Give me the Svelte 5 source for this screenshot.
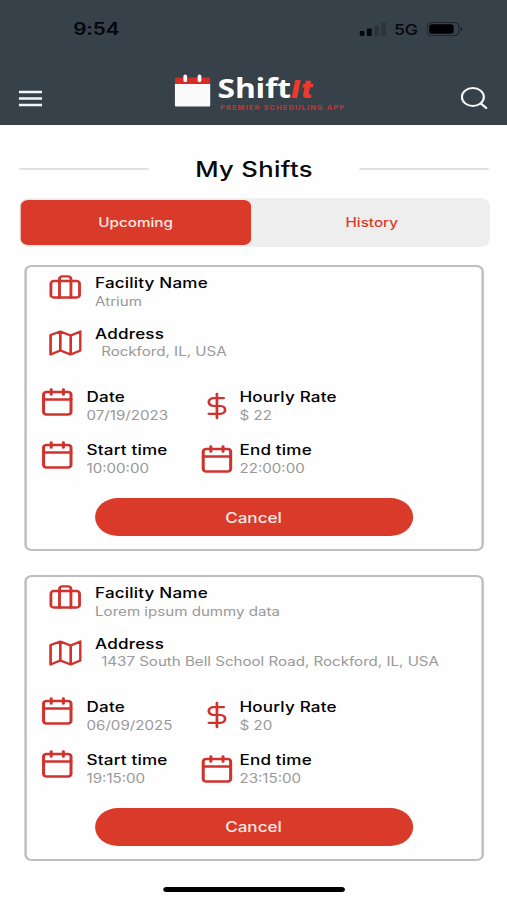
<script>
  let active = "Upcoming";
  const tabs = ["Upcoming", "History"];
  const shifts = [
    {
      facility: "Atrium",
      address: "Rockford, IL, USA",
      date: "07/19/2023",
      rate: 22,
      start: "10:00:00",
      end: "22:00:00"
    },
    {
      facility: "Lorem ipsum dummy data",
      address: "1437 South Bell School Road, Rockford, IL, USA",
      date: "06/09/2025",
      rate: 20,
      start: "19:15:00",
      end: "23:15:00"
    }
  ];
</script>

<style>
  :global(body) {
    background: #fefefe;
    overflow: hidden;
  }

  /* laid out 416 wide, stretched to fill the 507 window */
  .screen {
    width: 416px;
    height: 900px;
    display: flex;
    flex-direction: column;
    font-family: Inter, "Liberation Sans", sans-serif;
    color: #0c0c0c;
    background: #fefefe;
    transform: scaleX(1.21875);
    transform-origin: 0 0;
  }

  svg {
    display: block;
    flex: none;
  }

  header {
    height: 125px;
    flex: none;
    background: #37414a;
  }

  .status {
    display: flex;
    align-items: center;
    height: 58px;
    padding: 0 36px 0 60px;
    box-sizing: border-box;
    color: #04080c;
  }

  .time {
    font-size: 17px;
    font-weight: 600;
    letter-spacing: -0.1px;
    flex: 1;
  }

  .network {
    font-size: 14.5px;
    font-weight: 500;
    margin: 0 7px 0 6px;
  }

  .nav {
    display: flex;
    align-items: center;
    height: 67px;
    padding: 13px 16px 0 14.5px;
    box-sizing: border-box;
  }

  .brand {
    display: flex;
    align-items: flex-start;
    flex: 1;
    height: 40px;
    margin: 0 0 9px 108.5px;
  }

  .words {
    margin-left: 5.5px;
  }

  .name {
    font-family: "Open Sans", Inter, sans-serif;
    font-size: 26px;
    line-height: 29px;
    font-weight: 700;
    letter-spacing: -0.1px;
    color: #fff;
  }

  .name em {
    font-family: Inter, sans-serif;
    font-size: 25px;
    line-height: 1;
    font-weight: 800;
    letter-spacing: 0.8px;
    color: #ee3a2c;
  }

  .tagline {
    font-size: 6px;
    line-height: 8px;
    font-weight: 700;
    letter-spacing: 1px;
    margin: 1px 0 0 2px;
    white-space: nowrap;
    color: #c93530;
  }

  .menu,
  .search {
    padding: 0;
    border: 0;
    background: none;
  }

  .title {
    display: flex;
    align-items: center;
    justify-content: space-between;
    height: 40px;
    margin: 24px 15px 9px 16px;
  }

  .title::before,
  .title::after {
    content: "";
    width: 106px;
    height: 2px;
    background: #e0e0e0;
  }

  h1 {
    margin: 0;
    font-size: 21px;
    font-weight: 500;
    letter-spacing: 0.3px;
    color: #080808;
  }

  .tabs {
    display: flex;
    height: 49px;
    margin: 0 14.5px 0 16px;
    padding: 2px 1px;
    box-sizing: border-box;
    border-radius: 8px;
    background: #eee;
  }

  .tabs button {
    flex: 1;
    padding: 0 0 1px 4px;
    border: 0;
    border-radius: 6px;
    background: none;
    font: 500 12.5px Inter, sans-serif;
    color: #dc3a2b;
  }

  .tabs button.active {
    flex: none;
    width: 188.5px;
    padding: 0 0 1px;
    background: #d93a29;
    color: #fbe9e6;
  }

  .card {
    height: 286px;
    flex: none;
    margin: 18px 19.5px 6px 20px;
    padding: 6px 0 0;
    box-sizing: border-box;
    border: 2px solid #bebebe;
    border-radius: 6px;
  }

  .card + .card {
    margin-top: 17.5px;
  }

  .row {
    display: flex;
    height: 52px;
    padding-left: 18px;
  }

  .row svg {
    margin: 1px 11px 0 0;
  }

  .pairs {
    display: grid;
    grid-template-columns: 126px 1fr;
    grid-auto-rows: 53px;
    padding: 11px 0 0 10px;
  }

  .pair {
    display: flex;
  }

  .pair svg {
    width: 30px;
    height: 30px;
    margin: -1.5px 9px 0 0;
  }

  .low svg {
    margin: 3px 4px 0 4.5px;
  }

  .low svg.dollar {
    margin-top: 2.5px;
  }

  .label {
    font-size: 14px;
    line-height: 18px;
    font-weight: 500;
    letter-spacing: 0.15px;
    white-space: nowrap;
    color: #000;
  }

  .value {
    font-size: 12.4px;
    line-height: 19px;
    white-space: nowrap;
    color: #999;
  }

  .row .label {
    line-height: 19px;
  }

  .row .value {
    line-height: 20px;
  }

  .address .label {
    line-height: 18px;
  }

  .address .value {
    line-height: 17px;
    padding-left: 5px;
  }

  .cancel {
    display: block;
    width: 261px;
    height: 38px;
    margin: 4px 0 0 56px;
    padding: 0 1px 0 0;
    border: 0;
    border-radius: 19px;
    background: #d93a29;
    color: #fbe9e6;
    font: 500 14px Inter, sans-serif;
  }

  .home {
    width: 149px;
    height: 5px;
    flex: none;
    margin: 20.5px auto 0;
    border-radius: 3px;
    background: #000;
  }

  .icon {
    fill: none;
    stroke: #cf332d;
    stroke-width: 2;
    stroke-linecap: round;
    stroke-linejoin: round;
  }
</style>

{#snippet calendar()}
  <svg class="icon" viewBox="0 0 24 24">
    <rect x="3" y="4" width="18" height="18" rx="2" />
    <path d="M16 2v4M8 2v4M3 10h18" />
  </svg>
{/snippet}

<div class="screen">
  <header>
    <div class="status">
      <span class="time">9:54</span>
      <svg width="22" height="14" viewBox="0 0 22 14">
        <rect x="0" y="9" width="4" height="5" rx="1" fill="#04080c" />
        <rect x="6" y="6.5" width="4" height="7.5" rx="1" fill="#04080c" />
        <rect x="12" y="3.5" width="4" height="10.5" rx="1" fill="#2c353d" />
        <rect x="18" y="0.5" width="4" height="13.5" rx="1" fill="#2c353d" />
      </svg>
      <span class="network">5G</span>
      <svg width="30" height="14" viewBox="0 0 30 14">
        <rect x="0.5" y="0.5" width="26" height="13" rx="4" fill="none" stroke="#20282f" />
        <rect x="2.2" y="2.2" width="20" height="9.6" rx="2.5" fill="#000" />
        <path d="M28 5v4q1.5-.5 1.5-2T28 5" fill="#161d23" />
      </svg>
    </div>
    <div class="nav">
      <button class="menu" aria-label="Menu">
        <svg width="20" height="17" viewBox="0 0 20 17">
          <path d="M.5 2h19M.5 8.5h19M.5 15h19" stroke="#f2f6f8" stroke-width="2.4" />
        </svg>
      </button>
      <div class="brand">
        <svg width="30" height="33" viewBox="0 0 30 33">
          <path d="M.5 10h29v21.500q0 1-1 1h-27q-1 0-1-1z" fill="#fafafa" />
          <path d="M.5 10V5q0-1.500 1.500-1.500h26q1.500 0 1.500 1.500v5z" fill="#d62d27" />
          <path d="M9 2v4.500M20.700 2v4.500" stroke="#fafafa" stroke-width="3" stroke-linecap="round" />
        </svg>
        <div class="words">
          <div class="name">Shift<em>It</em></div>
          <div class="tagline">PREMIER SCHEDULING APP</div>
        </div>
      </div>
      <button class="search" aria-label="Search">
        <svg width="22" height="22" viewBox="0 0 22 22">
          <circle cx="10" cy="10" r="9" fill="none" stroke="#f4f8fa" stroke-width="1.8" />
          <path d="M16.500 16.500l4.500 4.500" stroke="#f4f8fa" stroke-width="2" stroke-linecap="round" />
        </svg>
      </button>
    </div>
  </header>

  <div class="title"><h1>My Shifts</h1></div>

  <div class="tabs">
    {#each tabs as tab}
      <button class:active={tab === active} on:click={() => (active = tab)}>{tab}</button>
    {/each}
  </div>

  {#each shifts as shift}
    <section class="card">
      <div class="row">
        <svg class="icon" width="27" height="27" viewBox="0.500 1 23 23">
          <rect x="2" y="7" width="20" height="14" rx="2" />
          <path d="M16 21V5a2 2 0 0 0-2-2h-4a2 2 0 0 0-2 2v16" />
        </svg>
        <div>
          <div class="label">Facility Name</div>
          <div class="value">{shift.facility}</div>
        </div>
      </div>
      <div class="row address">
        <svg class="icon" width="27" height="36" viewBox="0 0 27 36">
          <path d="M1.500 9l8-3.500 8.500 4 8-4v19l-8 4-8.500-4-8 4zM9.500 5.500v19M18 9.500v19" stroke-width="2.200" />
        </svg>
        <div>
          <div class="label">Address</div>
          <div class="value">{shift.address}</div>
        </div>
      </div>
      <div class="pairs">
        <div class="pair">
          {@render calendar()}
          <div>
            <div class="label">Date</div>
            <div class="value">{shift.date}</div>
          </div>
        </div>
        <div class="pair low">
          <svg class="icon dollar" viewBox="-1.500 -1.500 27 27">
            <path d="M12 1v22M17 5H9.500a3.500 3.500 0 0 0 0 7h5a3.500 3.500 0 0 1 0 7H6" />
          </svg>
          <div>
            <div class="label">Hourly Rate</div>
            <div class="value">$ {shift.rate}</div>
          </div>
        </div>
        <div class="pair">
          {@render calendar()}
          <div>
            <div class="label">Start time</div>
            <div class="value">{shift.start}</div>
          </div>
        </div>
        <div class="pair low">
          {@render calendar()}
          <div>
            <div class="label">End time</div>
            <div class="value">{shift.end}</div>
          </div>
        </div>
      </div>
      <button class="cancel">Cancel</button>
    </section>
  {/each}

  <div class="home"></div>
</div>
